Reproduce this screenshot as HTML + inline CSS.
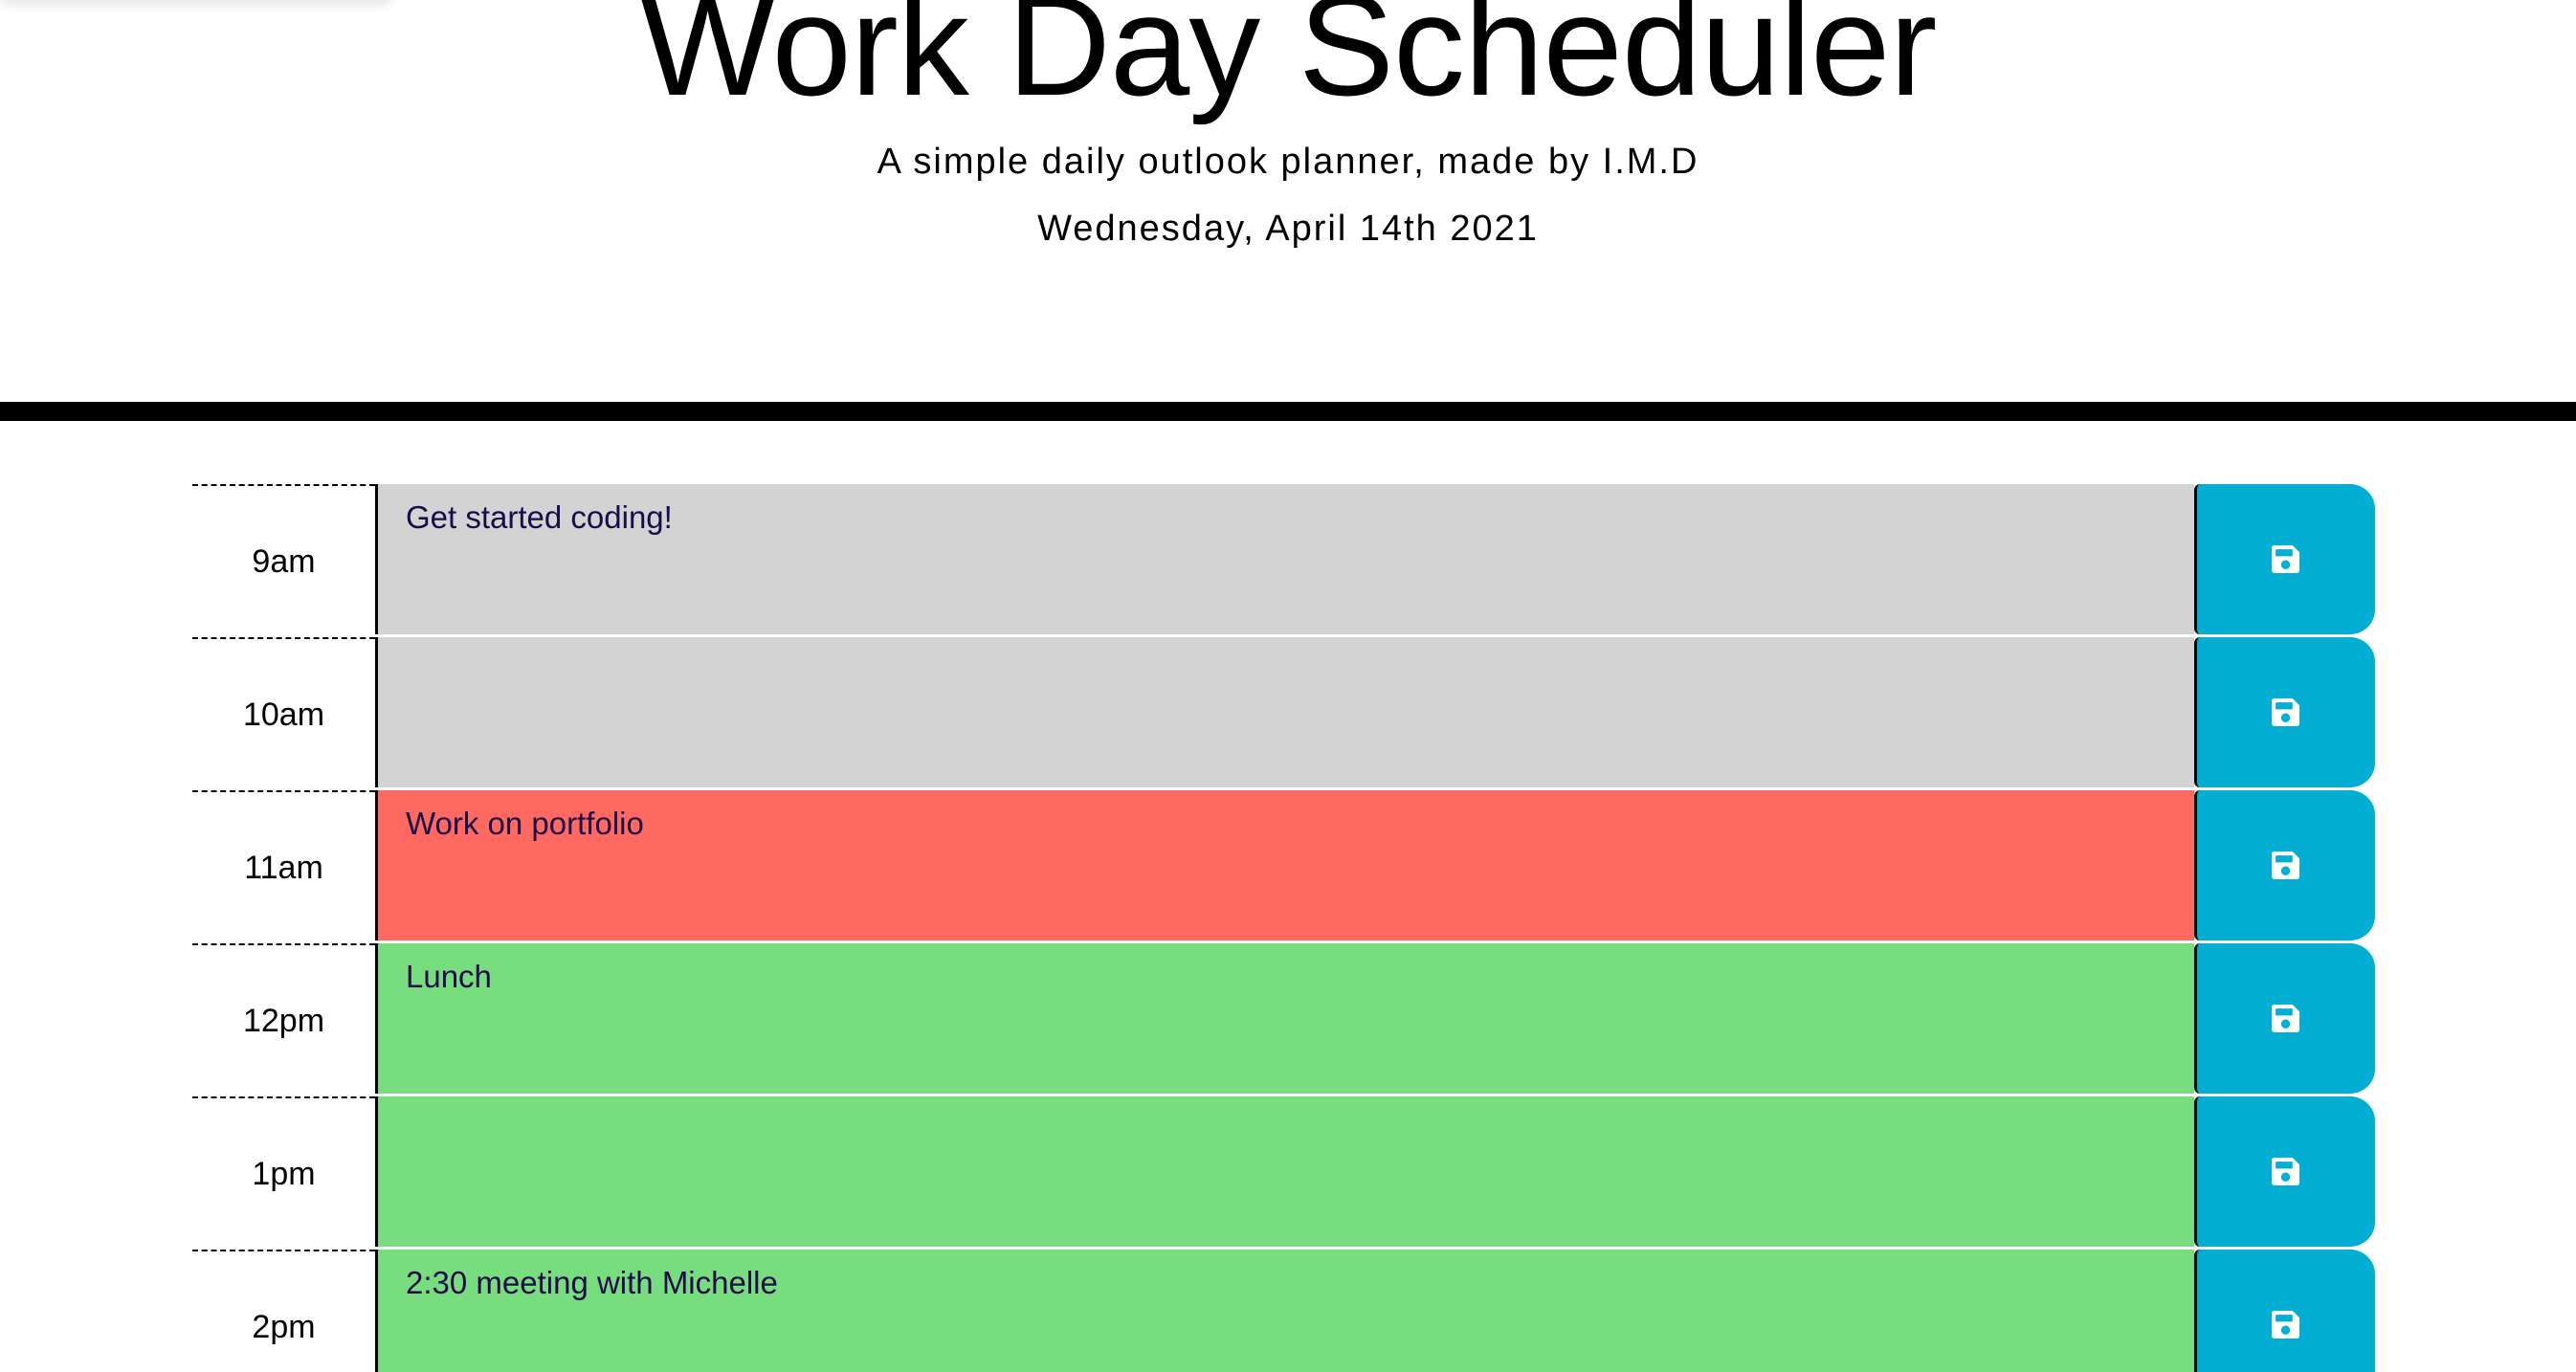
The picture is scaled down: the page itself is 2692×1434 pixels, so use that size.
<!DOCTYPE html>
<html><head><meta charset="utf-8"><style>
*{box-sizing:border-box;margin:0;padding:0}
html,body{width:2692px;height:1434px;overflow:hidden;background:#fff;font-family:"Liberation Sans",sans-serif;position:relative}
.shadow{position:absolute;left:0;top:-20px;width:410px;height:20px;box-shadow:0 4px 12px rgba(0,0,0,.12);border-radius:0 0 10px 10px}
h1{position:absolute;left:0;width:2692px;top:-28px;text-align:center;font-weight:400;font-size:150px;line-height:1;color:#000;letter-spacing:-1px}
.sub{position:absolute;left:0;width:2692px;text-align:center;font-size:38px;line-height:1;color:#000;letter-spacing:2px}
.bar{position:absolute;left:0;top:420px;width:2692px;height:20px;background:#000}
.row{position:absolute;left:201px;width:2281px;height:157px}
.hour{position:absolute;left:0;top:0;width:191px;height:160px;border-top:2px dashed #000;font-size:34px;text-align:center;padding-top:60px}
.ta{position:absolute;left:191px;top:0;width:1901px;height:157px;border-left:3px solid #000;font-size:33px;color:#1a0b4b;padding:16px 0 0 29px}
.btn{position:absolute;left:2092px;top:0;width:189px;height:157px;background:#02aed4;border-left:3px solid #000;border-radius:6px 26px 26px 6px}
.btn svg{position:absolute;left:78px;top:64px}
</style></head><body>
<div class="shadow"></div>
<h1>Work Day Scheduler</h1>
<div class="sub" style="top:150px">A simple daily outlook planner, made by I.M.D</div>
<div class="sub" style="top:220px">Wednesday, April 14th 2021</div>
<div class="bar"></div>

<div class="row" style="top:506px"><div class="hour">9am</div><div class="ta" style="background:#d3d3d3">Get started coding!</div><div class="btn"><svg width="29" height="29" viewBox="0 0 28 28"><path d="M3 0H21L28 7V25Q28 28 25 28H3Q0 28 0 25V3Q0 0 3 0ZM4 4V11H21V4ZM14 15A4.5 4.5 0 1 0 14.01 15Z" fill="#fff" fill-rule="evenodd"/></svg></div></div>
<div class="row" style="top:666px"><div class="hour">10am</div><div class="ta" style="background:#d3d3d3"></div><div class="btn"><svg width="29" height="29" viewBox="0 0 28 28"><path d="M3 0H21L28 7V25Q28 28 25 28H3Q0 28 0 25V3Q0 0 3 0ZM4 4V11H21V4ZM14 15A4.5 4.5 0 1 0 14.01 15Z" fill="#fff" fill-rule="evenodd"/></svg></div></div>
<div class="row" style="top:826px"><div class="hour">11am</div><div class="ta" style="background:#ff6961">Work on portfolio</div><div class="btn"><svg width="29" height="29" viewBox="0 0 28 28"><path d="M3 0H21L28 7V25Q28 28 25 28H3Q0 28 0 25V3Q0 0 3 0ZM4 4V11H21V4ZM14 15A4.5 4.5 0 1 0 14.01 15Z" fill="#fff" fill-rule="evenodd"/></svg></div></div>
<div class="row" style="top:986px"><div class="hour">12pm</div><div class="ta" style="background:#77dd7f">Lunch</div><div class="btn"><svg width="29" height="29" viewBox="0 0 28 28"><path d="M3 0H21L28 7V25Q28 28 25 28H3Q0 28 0 25V3Q0 0 3 0ZM4 4V11H21V4ZM14 15A4.5 4.5 0 1 0 14.01 15Z" fill="#fff" fill-rule="evenodd"/></svg></div></div>
<div class="row" style="top:1146px"><div class="hour">1pm</div><div class="ta" style="background:#77dd7f"></div><div class="btn"><svg width="29" height="29" viewBox="0 0 28 28"><path d="M3 0H21L28 7V25Q28 28 25 28H3Q0 28 0 25V3Q0 0 3 0ZM4 4V11H21V4ZM14 15A4.5 4.5 0 1 0 14.01 15Z" fill="#fff" fill-rule="evenodd"/></svg></div></div>
<div class="row" style="top:1306px"><div class="hour">2pm</div><div class="ta" style="background:#77dd7f">2:30 meeting with Michelle</div><div class="btn"><svg width="29" height="29" viewBox="0 0 28 28"><path d="M3 0H21L28 7V25Q28 28 25 28H3Q0 28 0 25V3Q0 0 3 0ZM4 4V11H21V4ZM14 15A4.5 4.5 0 1 0 14.01 15Z" fill="#fff" fill-rule="evenodd"/></svg></div></div>
</body></html>
